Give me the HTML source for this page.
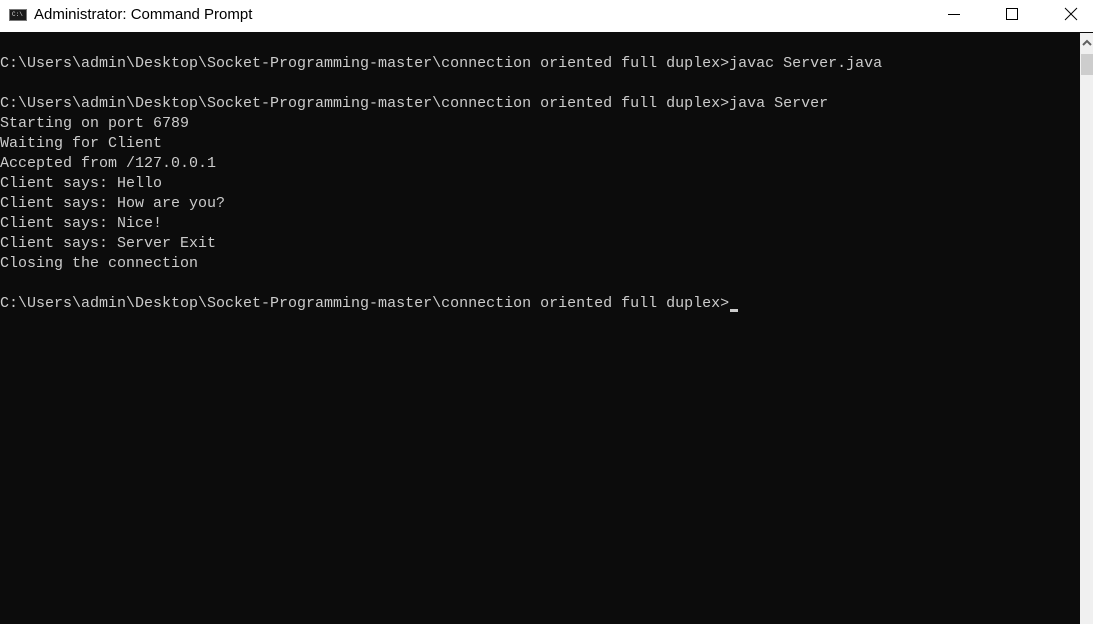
<!DOCTYPE html>
<html><head><meta charset="utf-8"><style>
html,body{margin:0;padding:0;width:1093px;height:624px;overflow:hidden;background:#0c0c0c;font-family:"Liberation Sans",sans-serif}
.title{position:absolute;left:0;top:0;width:1093px;height:32px;background:#fff}
.title .t{position:absolute;left:34px;top:6px;font-size:15px;color:#000}
.icon{position:absolute;left:9px;top:9px;width:18px;height:12px;background:#1a1a1a;border:1px solid #777;box-sizing:border-box}
.icon span{position:absolute;left:2px;top:1px;font:6px "Liberation Mono",monospace;color:#ddd}
.con{position:absolute;left:0;top:33px;width:1080px;height:591px;background:#0c0c0c}
pre{margin:0;padding-top:21px;font-family:"Liberation Mono",monospace;font-size:15px;line-height:20px;color:#cccccc;white-space:pre}
.cur{position:absolute;left:730px;top:309px;width:8px;height:3px;background:#ccc}
.sb{position:absolute;left:1080px;top:33px;width:13px;height:591px;background:#f0f0f0}
.thumb{position:absolute;left:1px;top:21px;width:12px;height:21px;background:#cdcdcd}
</style></head><body>
<div class="title">
<div class="icon"><span>C:\</span></div>
<div class="t">Administrator: Command Prompt</div>
<svg style="position:absolute;left:940px;top:0" width="153" height="32">
<line x1="8" y1="14.5" x2="20" y2="14.5" stroke="#000" stroke-width="1"/>
<rect x="66.5" y="8.5" width="11" height="11" fill="none" stroke="#000" stroke-width="1"/>
<line x1="125" y1="8" x2="137" y2="20" stroke="#000" stroke-width="1"/>
<line x1="137" y1="8" x2="125" y2="20" stroke="#000" stroke-width="1"/>
</svg>
</div>
<div class="con"><pre>C:\Users\admin\Desktop\Socket-Programming-master\connection oriented full duplex&gt;javac Server.java

C:\Users\admin\Desktop\Socket-Programming-master\connection oriented full duplex&gt;java Server
Starting on port 6789
Waiting for Client
Accepted from /127.0.0.1
Client says: Hello
Client says: How are you?
Client says: Nice!
Client says: Server Exit
Closing the connection

C:\Users\admin\Desktop\Socket-Programming-master\connection oriented full duplex&gt;</pre></div>
<div class="cur"></div>
<div class="sb">
<svg style="position:absolute;left:2px;top:6px" width="10" height="8"><polyline points="1,6 5,2 9,6" fill="none" stroke="#606060" stroke-width="2"/></svg>
<div class="thumb"></div>
</div>
</body></html>
